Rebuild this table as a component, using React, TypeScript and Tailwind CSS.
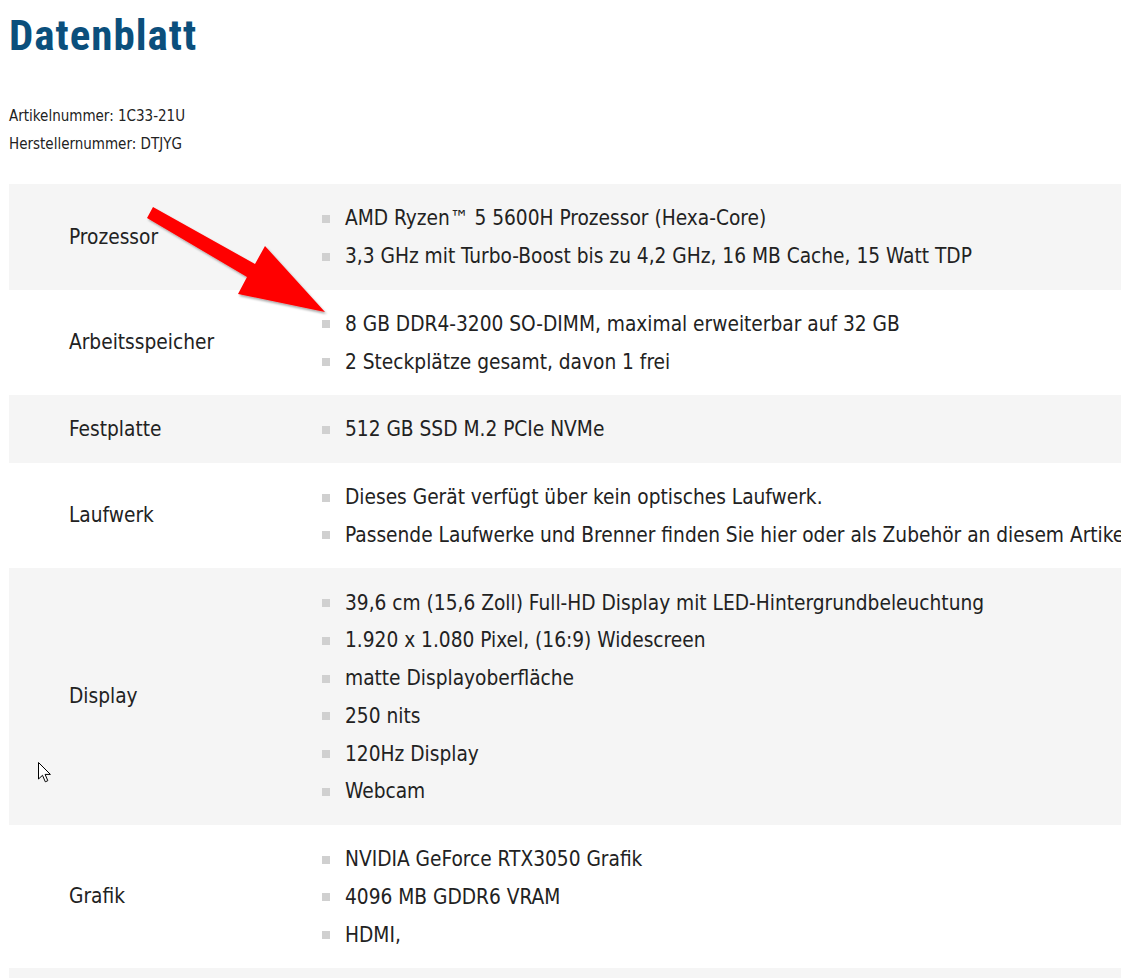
import React from "react";

const rows: { label: string; items: string[] }[] = [
  {
    label: "Prozessor",
    items: [
      "AMD Ryzen™ 5 5600H Prozessor (Hexa-Core)",
      "3,3 GHz mit Turbo-Boost bis zu 4,2 GHz, 16 MB Cache, 15 Watt TDP",
    ],
  },
  {
    label: "Arbeitsspeicher",
    items: [
      "8 GB DDR4-3200 SO-DIMM, maximal erweiterbar auf 32 GB",
      "2 Steckplätze gesamt, davon 1 frei",
    ],
  },
  { label: "Festplatte", items: ["512 GB SSD M.2 PCIe NVMe"] },
  {
    label: "Laufwerk",
    items: [
      "Dieses Gerät verfügt über kein optisches Laufwerk.",
      "Passende Laufwerke und Brenner finden Sie hier oder als Zubehör an diesem Artikel.",
    ],
  },
  {
    label: "Display",
    items: [
      "39,6 cm (15,6 Zoll) Full-HD Display mit LED-Hintergrundbeleuchtung",
      "1.920 x 1.080 Pixel, (16:9) Widescreen",
      "matte Displayoberfläche",
      "250 nits",
      "120Hz Display",
      "Webcam",
    ],
  },
  {
    label: "Grafik",
    items: ["NVIDIA GeForce RTX3050 Grafik", "4096 MB GDDR6 VRAM", "HDMI,"],
  },
  { label: "", items: [""] },
];

export default function App() {
  return (
    <div className="relative w-[1121px] h-[978px] overflow-hidden bg-white text-[#222] font-['DejaVu_Sans_Condensed','DejaVu_Sans',sans-serif]">
      <div className="pl-[9px]">
        <h1 className="pt-[9px] text-[43px] leading-[52px] font-bold text-[#0b4f7c] font-['Roboto_Condensed','DejaVu_Sans_Condensed','Liberation_Sans_Narrow',sans-serif] tracking-[1px]">
          Datenblatt
        </h1>
        <div className="mt-[41px] text-[15px] leading-[28px]">
          <div>Artikelnummer: 1C33-21U</div>
          <div>Herstellernummer: DTJYG</div>
        </div>
      </div>

      <div className="mt-[26px] ml-[9px] w-[1300px]">
        {rows.map((r, i) => (
          <div
            key={i}
            className={`grid grid-cols-[297px_1fr] ${i % 2 === 0 ? "bg-[#f5f5f5]" : "bg-white"}`}
          >
            <div className="flex items-center pl-[60px] pt-[1px] text-[20.7px]">{r.label}</div>
            <ul className="pt-[16px] pb-[14px]">
              {r.items.map((t, j) => (
                <li key={j} className="flex items-center h-[37.75px] text-[20.7px] whitespace-nowrap">
                  {t && <span className="ml-[16px] mr-[15px] w-[8px] h-[8px] bg-[#d0d0d0] shrink-0" />}
                  {t}
                </li>
              ))}
            </ul>
          </div>
        ))}
      </div>

      {/* red annotation arrow */}
      <svg
        className="absolute left-0 top-0 pointer-events-none"
        width="400"
        height="340"
        viewBox="0 0 400 340"
      >
        <defs>
          <filter id="sh" x="-10%" y="-10%" width="130%" height="130%">
            <feDropShadow dx="1.5" dy="2" stdDeviation="1.2" floodColor="#000" floodOpacity="0.35" />
          </filter>
        </defs>
        <polygon
          points="153,207 147,218 247,277 238,294 325,312 265,246 255,264"
          fill="#ff0000"
          filter="url(#sh)"
        />
      </svg>

      {/* mouse cursor */}
      <svg className="absolute left-[38px] top-[762px]" width="14" height="24" viewBox="0 0 14 24">
        <path
          d="M0.5 0.5 L0.5 17 L4.5 13.3 L7.3 19.8 L9.8 18.7 L7.1 12.4 L12.4 12.4 Z"
          fill="#fff"
          stroke="#000"
          strokeWidth="1"
          strokeLinejoin="round"
        />
      </svg>
    </div>
  );
}
